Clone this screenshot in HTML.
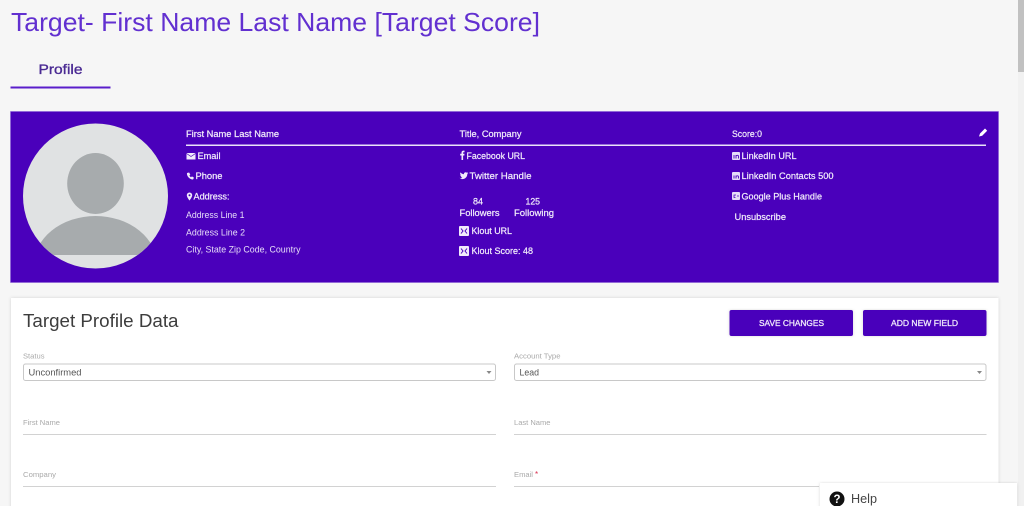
<!DOCTYPE html>
<html><head><meta charset="utf-8"><style>
html,body{margin:0;padding:0;width:1024px;height:506px;overflow:hidden;background:#f6f6f6}
svg{display:block;position:absolute;left:0;top:0}
text{font-family:"Liberation Sans",sans-serif}
.w{fill:#f1ebfb;font-size:9px;stroke:#f1ebfb;stroke-width:.22px}
.n{fill:#e6dcf8;font-size:9px}
.l{fill:#a9a9a9;font-size:7.5px}
.v{fill:#555;font-size:9px}
.b{fill:#efe8fb;font-size:8.5px;stroke:#efe8fb;stroke-width:.3px}
</style></head><body>
<svg width="1024" height="506" viewBox="0 0 1024 506" xmlns="http://www.w3.org/2000/svg">
<defs>
<clipPath id="c"><circle cx="95.5" cy="196" r="72.5"/></clipPath>
<filter id="s" x="-5%" y="-5%" width="110%" height="110%"><feDropShadow dx="0" dy="0" stdDeviation="1.5" flood-color="#000" flood-opacity=".14"/></filter>
</defs>
<rect width="1024" height="506" fill="#f6f6f6"/>
<rect x="1018" y="0" width="6" height="506" fill="#f1f1f1"/>
<rect x="1018" y="0" width="6" height="72" fill="#c1c1c1"/>
<text x="11" y="31" font-size="26" fill="#6230d0" textLength="529" lengthAdjust="spacingAndGlyphs">Target- First Name Last Name [Target Score]</text>
<text x="38.500" y="74" font-size="14" fill="#4a2a93" stroke="#4a2a93" stroke-width=".35" textLength="44" lengthAdjust="spacingAndGlyphs">Profile</text>
<rect x="10.500" y="86.500" width="100" height="2" fill="#5a1ecb"/>
<rect x="10.500" y="111.500" width="988" height="171" fill="#4a00bb" stroke="#8a5fd6" stroke-width=".6"/>
<circle cx="95.500" cy="196" r="72.500" fill="#e0e2e3"/>
<g clip-path="url(#c)"><ellipse cx="95.500" cy="183.500" rx="28.300" ry="30.500" fill="#a7abad"/>
<path d="M33.500 255V266A62 50 0 0 1 157.500 266V255Z" fill="none"/>
<path d="M20 255H171V216H20Z" fill="none"/>
<clipPath id="t"><rect x="20" y="200" width="151" height="55"/></clipPath>
<ellipse cx="95.500" cy="266" rx="62" ry="50" fill="#a7abad" clip-path="url(#t)"/></g>
<rect x="186" y="144.500" width="800" height="1.500" fill="#e9e2f8"/>
<text class="w" x="186" y="137" textLength="93" lengthAdjust="spacingAndGlyphs">First Name Last Name</text>
<text class="w" x="459.500" y="137" textLength="62" lengthAdjust="spacingAndGlyphs">Title, Company</text>
<text class="w" x="732" y="137" textLength="30" lengthAdjust="spacingAndGlyphs">Score:0</text>
<path d="M979 136.500l1-3 5-5 2.200 2.200-5 5z" fill="#fff"/>
<path d="M186.500 153h9v6.500h-9z" fill="#f1ebfb"/><path d="M186.500 153.500l4.500 3 4.500-3" fill="none" stroke="#4a00bb" stroke-width=".7"/>
<text class="w" x="197.500" y="159" textLength="23" lengthAdjust="spacingAndGlyphs">Email</text>
<path d="M187 173c-.6 3 2.800 6.600 6 6.500l1-1.800-2-1.300-1 .8c-.8-.4-1.300-1-1.500-1.800l.8-.9-1.200-2z" fill="#f1ebfb"/>
<text class="w" x="195.500" y="179" textLength="27" lengthAdjust="spacingAndGlyphs">Phone</text>
<path d="M189.500 192.500a2.700 2.700 0 0 1 2.700 2.700c0 1.800-2.700 5.300-2.700 5.300s-2.700-3.500-2.700-5.300a2.700 2.700 0 0 1 2.700-2.700z" fill="#f1ebfb"/><circle cx="189.500" cy="195.200" r="1" fill="#4a00bb"/>
<text class="w" x="193.500" y="199.500" textLength="36" lengthAdjust="spacingAndGlyphs">Address:</text>
<text class="n" x="186" y="218" textLength="58.500" lengthAdjust="spacingAndGlyphs">Address Line 1</text>
<text class="n" x="186" y="235.500" textLength="59" lengthAdjust="spacingAndGlyphs">Address Line 2</text>
<text class="n" x="186" y="252.500" textLength="114.500" lengthAdjust="spacingAndGlyphs">City, State Zip Code, Country</text>
<path d="M461.500 160v-4.500h-1.300v-1.700h1.300v-1.200c0-1.400.9-2 2-2h1v1.600h-.7c-.5 0-.7.200-.7.700v.9h1.400l-.2 1.700h-1.200v4.500z" fill="#f1ebfb"/>
<text class="w" x="466.500" y="159" textLength="58.500" lengthAdjust="spacingAndGlyphs">Facebook URL</text>
<path d="M460 174.500c1 .7 2.200.4 2.700-.2-.9 0-1.300-.5-1.500-1 .3.100.6 0 .8 0-.9-.3-1.300-.9-1.400-1.700.3.100.5.200.8.200-.8-.6-1-1.500-.5-2.400.9 1.100 2 1.700 3.500 1.800-.2-1.700 1.900-2.600 3-1.500.4-.1.700-.2 1.100-.4-.1.400-.4.800-.7 1 .3 0 .6-.1.900-.2-.2.400-.5.700-.9.900.1 3.600-3.700 6.500-7.600 4.500.9.100 1.700-.1 2.400-.6-.9 0-1.500 0-3-.4z" fill="#f1ebfb" transform="translate(-.5 3)"/>
<text class="w" x="469.500" y="179" textLength="62" lengthAdjust="spacingAndGlyphs">Twitter Handle</text>
<text class="w" x="473" y="204.500" textLength="10" lengthAdjust="spacingAndGlyphs">84</text>
<text class="w" x="525.500" y="204.500" textLength="14.500" lengthAdjust="spacingAndGlyphs">125</text>
<text class="w" x="459.500" y="216" textLength="40" lengthAdjust="spacingAndGlyphs">Followers</text>
<text class="w" x="514" y="216" textLength="40" lengthAdjust="spacingAndGlyphs">Following</text>
<rect x="459" y="226" width="10" height="10" rx="1" fill="#f1ebfb"/><path d="M461 228.500l2 2.500-2 2.500M467 228.500l-2 2.500 2 2.500" fill="none" stroke="#4a00bb" stroke-width="1"/>
<text class="w" x="471.500" y="234" textLength="40.500" lengthAdjust="spacingAndGlyphs">Klout URL</text>
<rect x="459" y="246" width="10" height="10" rx="1" fill="#f1ebfb"/><path d="M461 248.500l2 2.500-2 2.500M467 248.500l-2 2.500 2 2.500" fill="none" stroke="#4a00bb" stroke-width="1"/>
<text class="w" x="471.500" y="254" textLength="61.500" lengthAdjust="spacingAndGlyphs">Klout Score: 48</text>
<rect x="732" y="152" width="8" height="8" rx="1" fill="#e6dcf8"/><path d="M734 155v3.500M736 158.500v-3.500M736 156c1-1 2.500-1 2.500.5v2" fill="none" stroke="#4a00bb" stroke-width=".9"/>
<text class="w" x="741.500" y="159" textLength="55" lengthAdjust="spacingAndGlyphs">LinkedIn URL</text>
<rect x="732" y="172" width="8" height="8" rx="1" fill="#e6dcf8"/><path d="M734 175.500v3M736 178.500v-3M736 176.500c1-1 2.500-1 2.500.5v1.500" fill="none" stroke="#4a00bb" stroke-width=".9"/>
<text class="w" x="741.500" y="179" textLength="92" lengthAdjust="spacingAndGlyphs">LinkedIn Contacts 500</text>
<rect x="732" y="192" width="8" height="8" rx="1" fill="#e6dcf8"/><path d="M736 195h-2v2.500h1.500M737 196h2" fill="none" stroke="#4a00bb" stroke-width=".8"/>
<text class="w" x="741.500" y="199.500" textLength="80.500" lengthAdjust="spacingAndGlyphs">Google Plus Handle</text>
<text class="w" x="734.500" y="220" textLength="51.500" lengthAdjust="spacingAndGlyphs">Unsubscribe</text>
<rect x="11" y="298" width="987.500" height="215" fill="#fff" filter="url(#s)"/>
<text x="23" y="327" font-size="18.500" fill="#3d3d3d" textLength="155.500" lengthAdjust="spacingAndGlyphs">Target Profile Data</text>
<rect x="729.500" y="310" width="123.500" height="26" rx="2" fill="#4a00bb" filter="url(#s)"/>
<rect x="863" y="310" width="123.500" height="26" rx="2" fill="#4a00bb" filter="url(#s)"/>
<text class="b" x="759" y="326" textLength="65" lengthAdjust="spacingAndGlyphs">SAVE CHANGES</text>
<text class="b" x="891" y="326" textLength="67" lengthAdjust="spacingAndGlyphs">ADD NEW FIELD</text>
<text class="l" x="23" y="358.500" textLength="21.500" lengthAdjust="spacingAndGlyphs">Status</text>
<text class="l" x="514" y="358.500" textLength="46.500" lengthAdjust="spacingAndGlyphs">Account Type</text>
<rect x="23.500" y="364" width="472" height="16.500" rx="2" fill="#fff" stroke="#c8c8c8"/>
<rect x="514.500" y="364" width="471.500" height="16.500" rx="2" fill="#fff" stroke="#c8c8c8"/>
<text class="v" x="28.500" y="375.500" textLength="53" lengthAdjust="spacingAndGlyphs">Unconfirmed</text>
<text class="v" x="519.500" y="375.500" textLength="19.500" lengthAdjust="spacingAndGlyphs">Lead</text>
<path d="M486.500 371h5l-2.500 3z" fill="#888"/><path d="M977 371h5l-2.500 3z" fill="#888"/>
<text class="l" x="23" y="425" textLength="37" lengthAdjust="spacingAndGlyphs">First Name</text>
<text class="l" x="514" y="425" textLength="36.500" lengthAdjust="spacingAndGlyphs">Last Name</text>
<rect x="23" y="434" width="473" height="1" fill="#d2d2d2"/>
<rect x="514" y="434" width="472.500" height="1" fill="#d2d2d2"/>
<text class="l" x="23" y="477" textLength="33" lengthAdjust="spacingAndGlyphs">Company</text>
<text class="l" x="514" y="477" textLength="19" lengthAdjust="spacingAndGlyphs">Email</text>
<text x="535" y="477" font-size="8" fill="#d9304f">*</text>
<rect x="23" y="486" width="473" height="1" fill="#d2d2d2"/>
<rect x="514" y="486" width="305" height="1" fill="#d2d2d2"/>
<rect x="820" y="483" width="197" height="30" fill="#fff" filter="url(#s)"/>
<circle cx="837" cy="499" r="7.500" fill="#111"/>
<text x="837" y="503" font-size="11.500" font-weight="700" fill="#fff" text-anchor="middle">?</text>
<text x="851" y="503" font-size="13" fill="#444" textLength="26" lengthAdjust="spacingAndGlyphs">Help</text>
</svg>
</body></html>
